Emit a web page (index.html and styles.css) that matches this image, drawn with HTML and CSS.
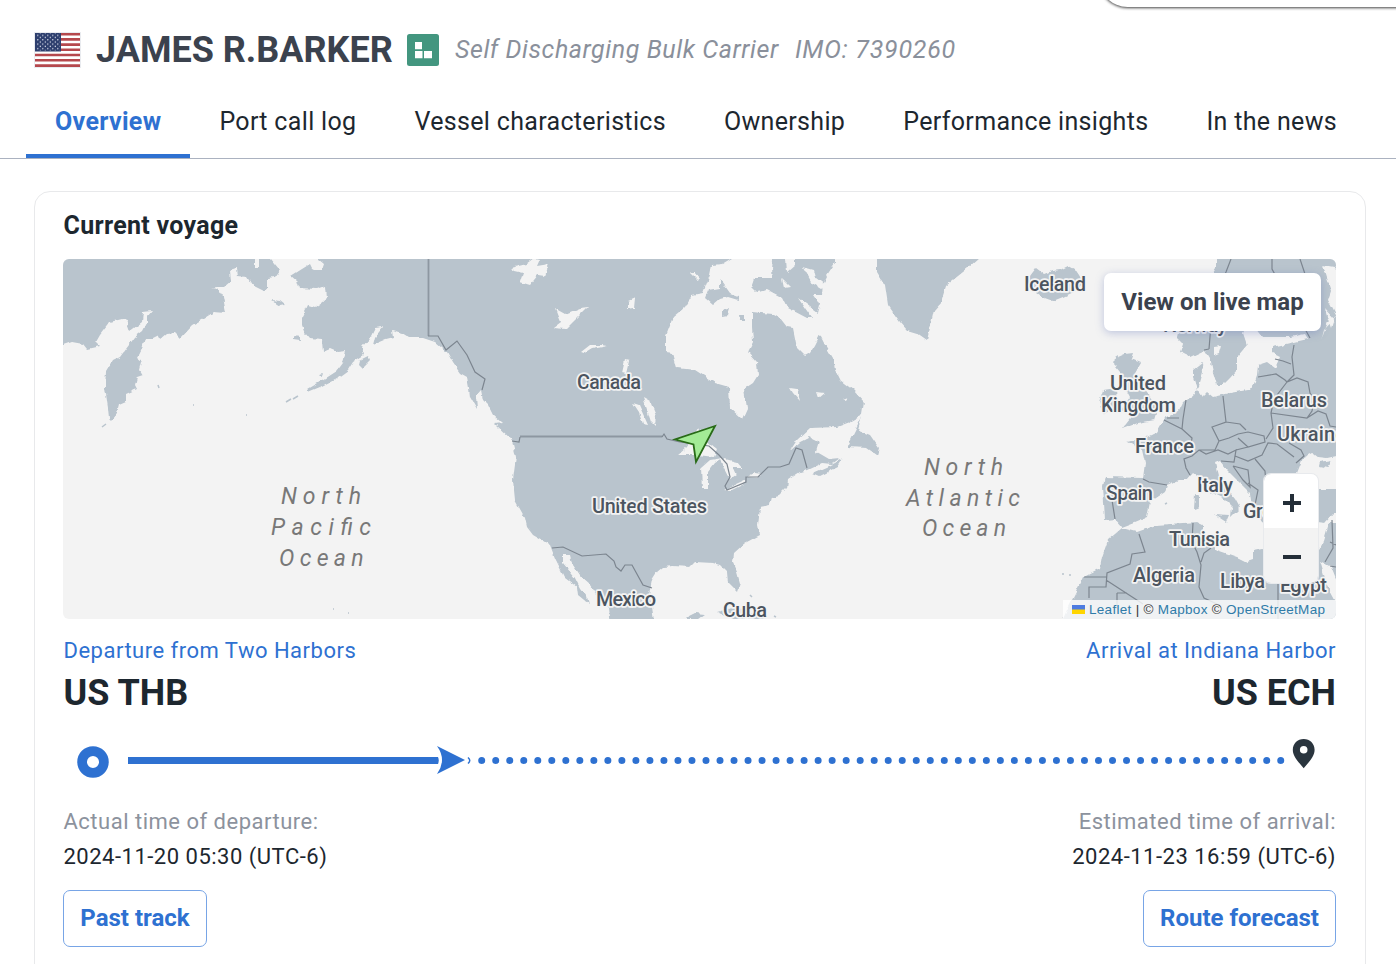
FILE: index.html
```html
<!DOCTYPE html>
<html lang="en">
<head>
<meta charset="utf-8">
<title>JAMES R.BARKER</title>
<link rel="stylesheet" href="styles.css">
</head>
<body>
<div class="search-pill"></div>
<header class="vessel">
  <svg class="flag" width="47" height="36" viewBox="0 0 47 36">
    <defs><pattern id="stars" width="5" height="4.4" patternUnits="userSpaceOnUse"><circle cx="1.3" cy="1.2" r=".7" fill="#dfe3ee"/><circle cx="3.8" cy="3.4" r=".7" fill="#dfe3ee"/></pattern></defs>
    <rect width="47" height="36" fill="#e9ebef"/><rect x="1" y="1" width="45" height="34" fill="#fff"/>
    <path d="M1 2.2h45M1 7.4h45M1 12.6h45M1 17.8h45M1 23h45M1 28.3h45M1 33.6h45" stroke="#b5484d" stroke-width="2.6"/>
    <rect x="1" y="1" width="26" height="18.5" fill="#2e3f6e"/><rect x="2" y="1.5" width="24" height="17" fill="url(#stars)"/>
  </svg>
  <h1 class="name">JAMES R.BARKER</h1>
  <svg class="badge" width="32" height="32" viewBox="0 0 32 32"><rect width="32" height="32" rx="2.5" fill="#43967f"/><path d="M8 8h7v7.300H8zM8 17h7.500v7.300H8zM17 17h8v7.300h-8z" fill="#fff"/></svg>
  <span class="kind">Self Discharging Bulk Carrier</span>
  <span class="imo">IMO: 7390260</span>
</header>
<nav class="tabs">
  <a class="tab active">Overview</a><a class="tab">Port call log</a><a class="tab">Vessel characteristics</a><a class="tab">Ownership</a><a class="tab">Performance insights</a><a class="tab">In the news</a>
</nav>
<main class="card">
  <h2 class="heading">Current voyage</h2>
  <div class="map">
    <svg class="world" width="1273" height="360" viewBox="63 259 1273 360">
      <defs><filter id="coast" x="0" y="0" width="100%" height="100%"><feTurbulence type="fractalNoise" baseFrequency=".14" numOctaves="2" seed="4"/><feDisplacementMap in="SourceGraphic" scale="4.500" xChannelSelector="R" yChannelSelector="G"/></filter></defs>
      <g filter="url(#coast)">
        <g class="land">
          <path d="M50 240V345H63L72 342 83 344 87 349 100 346 96 342 100 335 110 322 122 319 128 320 127 326 129 332 142 322 143 312 152 311 147 317 147 323 143 331 135 337 120 357 112 361 106 371 105 387 108 408 109 418 111 420 117 413 119 405 126 402 126 394 137 389 135 385 137 377 143 375 140 370 142 362 137 358 142 348 145 338 153 338 159 335 160 339 166 334 175 333 180 338 192 325 203 319 214 312 226 313 223 297 217 288 211 287 224 287 231 281 230 270 236 268 237 276 247 277 252 285 264 291 267 287 267 278 275 277 280 270 271 259V240H259V267H255V240Z"/>
          <path d="M318 240V259L324 264 322 270 313 270 310 264 302 269 291 276 297 281 299 288 317 289 326 286 327 298 322 302 315 307 308 305 302 317 302 325 305 333 310 339 322 340 323 352 330 349 337 352 346 351 343 363 337 371 323 380 308 389 308 392 320 387 337 378 348 370 353 362 364 355 362 347 370 338 375 328 383 327 375 337 373 345 385 340 393 338 392 330 402 333 410 338 423 338 435 342 447 352 453 363 460 373 467 377 469 388 470 397 477 409 476 396 481 390 483 400 488 405 493 415 502 423 495 424 512 440 516 457 513 480 515 500 525 518 527 527 533 535 550 545 555 558 560 568 565 578 577 587 578 595 589 604 587 597 580 588 575 578 563 563 563 555 570 555 572 563 582 578 590 585 598 597 609 608 612 635H656L652 607 649 595 652 580 657 572 663 567 673 566 690 567 695 562 713 563 720 565 727 572 728 583 737 592 740 583 737 572 733 563 734 553 745 543 760 535 758 525 760 507 770 505 772 497 780 495 787 488 788 480 800 472 807 470 822 463 832 464 840 458 829 459 817 452 820 442 810 437 800 442 790 451 797 440 810 428 837 427 850 422 862 415 864 402 853 390 840 380 835 370 833 358 825 345 820 335 815 345 810 353 805 356 797 348 793 328 787 327 780 318 773 314 752 312 752 328 753 342 748 352 757 362 758 375 753 383 744 389 747 408 742 419 730 408 729 387 715 383 695 370 677 368 673 353 666 352 666 335 673 317 685 307 692 295 703 293 710 275 712 265 722 264 732 258V240Z"/>
          <path d="M708 290 720 288 720 279 730 293 738 296 738 300 728 297 720 299 713 305 705 298ZM773 240V259L772 270 773 278 755 278 752 287 757 292 768 290 783 298 788 308 807 318 812 318 798 298 818 313 820 305 813 295 822 295 823 283 827 275 835 263 835 240ZM877 240V259L877 272 885 285 888 305 900 322 907 330 917 333 927 340 930 328 934 310 941 302 946 286 953 280 968 268 979 258V240Z"/>
          <path d="M862 417 858 430 870 435 879 448 877 455 867 448 847 447 853 435ZM813 473 827 467 843 459 838 467 820 476ZM722 311 730 308 728 315 722 316ZM740 315h4v6h-3ZM689 616 695 613 705 614 698 619H688ZM717 612 735 607 768 619H732Z"/>
          <path d="M1030 276 1036 268 1044 274 1052 271 1060 270 1068 266 1075 270 1079 276 1083 283 1076 291 1063 297 1053 301 1042 297 1036 293 1040 288 1030 284Z"/>
          <path d="M1118 357 1125 354 1133 353 1131 359 1141 363 1134 375 1143 388 1151 398 1159 407 1155 420 1137 423 1123 428 1133 415 1121 410 1130 397 1121 380 1120 372 1115 366ZM1103 390 1117 388 1118 405 1103 415 1099 402ZM1115 357l3-2-1 8-3 2Z"/>
          <path d="M1216 240V268L1206 285 1180 325 1177 337 1183 343 1180 352 1190 357 1205 350 1210 358 1213 372 1217 385 1223 385 1230 378 1237 370 1237 357 1247 345 1243 333 1250 320 1263 337 1290 337 1305 334 1308 339 1290 343 1272 347 1272 353 1280 357 1275 368 1267 362 1258 365 1257 375 1253 387 1247 390 1230 393 1213 397 1207 392 1202 397 1197 390 1193 378 1193 370 1202 363 1203 372 1199 386 1193 395 1183 402 1178 412 1165 418 1157 432 1147 437 1127 442 1142 450 1145 463 1143 478 1105 477 1103 485 1105 520 1115 519 1122 527 1135 522 1147 517 1150 502 1165 492 1167 485 1178 480 1187 480 1193 473 1203 480 1210 492 1223 498 1232 507 1231 517 1240 508 1235 499 1219 480 1215 463 1220 461 1227 470 1239 482 1250 493 1252 507 1262 522 1278 531 1282 517 1296 508 1299 520 1325 523 1334 513H1350V240Z"/>
          <path d="M1056 635 1067 610 1077 590 1083 577 1100 568 1102 557 1108 540 1122 528 1137 532 1157 525 1197 522 1203 525 1203 533 1217 550 1237 557 1247 562 1253 560 1253 550 1263 548 1285 555 1305 556 1318 551 1324 540 1329 523H1350V635ZM1195 494l4 2 0 11-5 2ZM1214 514l15 1-3 7ZM463 350l7 8-2 11-8-10ZM318 374l5-1-2 4ZM360 360l8-4 2 5-7 7-4-4ZM271 300l9 1 5 4-5 1ZM294 336l7 1v3l-7-1Z"/>
        </g>
        <g class="water">
          <path d="M510 268 527 264 535 258 540 259 537 266 549 264 545 276 538 275 530 285 520 282 523 273 514 271ZM556 309 565 314 580 308 588 307 573 322 566 329 553 328 561 322ZM581 352 590 345 608 345 592 348 584 353ZM628 301l7-3-1 10-6 1ZM625 360l4 1-3 13-4-1ZM633 403l6 2 9 20-5-1-4-12ZM643 397l7 4 6 15-1 10-4-4ZM678 455 687 447 698 428 704 439 717 450 714 457 698 455ZM701 468 710 460 723 458 715 463 708 472 708 489H702ZM721 458 737 462 742 468 733 468 736 475 730 479 724 468ZM723 490 735 485 746 480 746 483 730 491ZM746 477 755 472 762 473 757 478ZM690 272l8 8 2-1-6-7ZM803 267l11 3 2 8 9 7-3 4-10-6ZM786 259h9v6l-8 7ZM782 279l8 8-6 1ZM790 388l7 1 3 12-7-8ZM816 392l8 1-6 5ZM843 399l5-2-2 3ZM760 508l3 10-3-1ZM1214 347l7-1-2 7-5 2Z"/>
          <path d="M1297 473 1303 458 1313 453 1318 457 1327 458 1350 453V489H1320L1300 488ZM1334 267l6 9 7 28-9 15-10-19 3-9-8-26ZM1325 309l9 10-3 9-5-15ZM1322 338 1328 322 1337 316 1324 330ZM1320 561 1327 585 1341 611V592L1331 567Z"/>
        </g>
        <path class="land" d="M1320 462l12-2-4 8-9-2Z"/>
      </g>
      <g class="border">
        <path class="strong" d="M428.500 259V336M520 436.500H662"/>
        <path d="M428 336H438L446 350 457 341 467 355 475 372 485 379 482 390M512 441 519 442 520 437M662 437 664 434 667 439 680 442 709 446 719 455 727 464 730 477 725 486 727 490 746 482V477H758L768 467H780L789 464 796 448 802 450 807 468M552 548 563 547 582 556 606 554 614 561 616 567 621 571 625 565H632L643 585 652 588"/>
        <path d="M1231 259 1226 272 1213 300 1209 349M1272 259V269L1310 338M1300 259 1307 280M1209 349 1204 350M1294 345 1292 357 1294 375 1287 382M1258 377 1276 374 1285 380 1287 382 1297 378 1308 382 1310 393 1314 399 1312 411 1307 418 1271 413M1275 359 1283 361 1291 364M1287 382 1274 399 1271 413 1273 428 1266 439M1223 396 1226 422 1212 427 1219 441 1229 438 1238 434 1248 432 1264 436 1265 442 1248 447 1238 438M1226 422 1240 424 1246 430M1219 441 1215 450 1199 450 1192 456 1184 459 1186 468 1190 475M1186 400 1183 419 1182 429 1192 438 1190 450M1182 429 1164 420M1167 418 1179 418M1143 479 1149 482 1167 485M1115 485 1112 500 1115 519M1199 450 1206 454 1218 450 1228 454 1236 450 1234 462 1221 461M1236 450 1248 447M1235 456 1248 461 1262 455 1268 443 1277 444 1294 457M1233 466 1243 480 1250 487 1248 470 1233 466M1255 459 1265 471 1266 484 1274 488M1248 483 1258 490 1255 505M1289 443 1301 450 1304 456 1296 463M1307 418 1318 411 1326 414 1330 426 1336 427M1139 534 1145 552 1132 554 1130 564 1107 573 1106 587H1089V598M1084 577H1107M1106 580 1143 604M1117 593V609M1117 593H1127M1193 523 1192 542 1197 552 1201 565 1199 587 1204 598 1217 604M1201 562 1204 553 1211 548M1278 556V619M1332 520 1333 548 1325 562M1330 542 1336 545M1330 566 1336 567"/>
      </g>
      <g class="specks"><path d="M102 427l4-3M158 385l1 3M193 405h1M246 415h1M286 402l5-3M293 399l5-3M1062 574h2M1069 575h2M1165 504l2-1M750 595l2 2M774 616l2 1M333 609h1M348 613h1"/></g>
      <g class="place">
        <text x="577" y="388.500" textLength="64">Canada</text><text x="592" y="512.500" textLength="115">United States</text>
        <text x="596" y="606" textLength="60">Mexico</text><text x="723" y="617" textLength="44">Cuba</text>
        <text x="1024" y="290.500" textLength="62">Iceland</text><text x="1163" y="332" textLength="64">Norway</text>
        <text x="1110" y="389.500" textLength="56">United</text><text x="1101" y="411.500" textLength="75">Kingdom</text>
        <text x="1261" y="406.500" textLength="66">Belarus</text><text x="1277" y="441" textLength="69">Ukraine</text>
        <text x="1135" y="453" textLength="59">France</text><text x="1106" y="499.500" textLength="47">Spain</text><text x="1197" y="491.500" textLength="36">Italy</text>
        <text x="1243" y="518" textLength="60">Greece</text><text x="1169" y="546" textLength="61">Tunisia</text>
        <text x="1133" y="582" textLength="62">Algeria</text><text x="1220" y="588" textLength="45">Libya</text><text x="1280" y="592" textLength="47">Egypt</text>
      </g>
      <g class="ocean">
        <text x="281" y="503.500" textLength="80">North</text><text x="271" y="534.500" textLength="100">Pacific</text><text x="279" y="566" textLength="84.500">Ocean</text>
        <text x="924" y="474.500" textLength="79">North</text><text x="906" y="505.500" textLength="114">Atlantic</text><text x="922" y="536" textLength="84">Ocean</text>
      </g>
      <path d="M715 426 675 439.500 693.500 444.500 696 462Z" fill="#a3eb96" stroke="#296b18" stroke-width="1.800"/>
    </svg>
    <a class="live">View on live map</a>
    <div class="zoom"><span class="zoom-in"><svg width="18" height="18"><path d="M0 9h18M9 0v18" stroke="#242e38" stroke-width="4"/></svg></span><span class="zoom-out"><svg width="18" height="18"><path d="M0 9h18" stroke="#242e38" stroke-width="4"/></svg></span></div>
    <div class="credit"><svg width="13" height="9"><path fill="#4c7be1" d="M0 0h13v5H0z"/><path fill="#ffd500" d="M0 4.500h13V9H0z"/></svg><span><a>Leaflet</a> | © <a>Mapbox</a> © <a>OpenStreetMap</a></span></div>
  </div>
  <div class="row ports"><span>Departure from Two Harbors</span><span>Arrival at Indiana Harbor</span></div>
  <div class="row codes"><span>US THB</span><span>US ECH</span></div>
  <svg class="track" width="1273" height="60" viewBox="63 730 1273 60">
    <circle cx="93" cy="762" r="10.900" fill="none" stroke="#2e71d1" stroke-width="9.700"/>
    <path d="M128 757H438q1.500 3.500 0 7H128Z" fill="#2e71d1"/>
    <path d="M437 746 465 760 437 774Q447 760 437 746Z" fill="#2e71d1"/>
    <path d="M468 757.500q3.500 3 0 6" fill="none" stroke="#2e71d1" stroke-width="1.500"/>
    <path d="M481.700 760.500H1282" stroke="#2e71d1" stroke-width="7" stroke-linecap="round" stroke-dasharray="0 14.018"/>
    <path fill-rule="evenodd" d="M1303.700 739c-6.200 0-10.900 4.700-10.900 10.700 0 6.800 5.400 12 10.900 18.500 5.500-6.500 10.900-11.700 10.900-18.500 0-6-4.700-10.700-10.900-10.700Zm0 7a3.800 3.800 0 1 1 0 7.600 3.800 3.800 0 0 1 0-7.600Z" fill="#2a353e"/>
  </svg>
  <div class="row labels"><span>Actual time of departure:</span><span>Estimated time of arrival:</span></div>
  <div class="row times"><span>2024-11-20 05:30 (UTC-6)</span><span>2024-11-23 16:59 (UTC-6)</span></div>
  <div class="row actions"><a class="btn past">Past track</a><a class="btn route">Route forecast</a></div>
</main>
</body>
</html>
```
FILE: styles.css
```css
* { box-sizing: border-box; }
body { margin: 0; height: 964px; overflow: hidden; position: relative; background: #fff; color: #1d272f; font-family: Roboto, sans-serif; }
.search-pill { position: absolute; left: 1099px; top: -50px; width: 340px; height: 57px; border-radius: 29px; background: #fff; box-shadow: 0 1px 3px rgba(0,0,0,.75); }
.vessel { height: 100px; padding-left: 34px; display: flex; align-items: center; white-space: nowrap; }
.flag { flex: none; }
.name { width: 296px; margin: 0 0 0 15px; font-size: 36px; line-height: 44px; font-weight: 700; color: #3b424e; }
.badge { flex: none; margin-left: 15px; }
.kind, .imo { font-size: 25px; font-style: italic; line-height: 30px; color: #8a909b; }
.kind { width: 324px; margin-left: 16px; letter-spacing: .57px; }
.imo { margin-left: 16px; letter-spacing: .75px; }
.tabs { height: 59px; padding-left: 26px; display: flex; border-bottom: 1px solid #abb2c0; }
.tab { height: 58px; padding: 7px 29px 0; font-size: 25px; line-height: 30px; letter-spacing: .33px; white-space: nowrap; }
.tab.active { color: #2e71d1; font-weight: 700; border-bottom: 4px solid #2e71d1; }
.card { width: 1332px; height: 800px; margin: 32px 0 0 34px; padding: 18px 29px 0 28px; border: 1px solid #e8e9eb; border-radius: 16px; }
.heading { margin: 0; height: 49px; padding-left: .5px; font-size: 25px; line-height: 32px; font-weight: 700; letter-spacing: .3px; }
.map { position: relative; height: 360px; border-radius: 6px; overflow: hidden; background: #f3f3f3; }
.world { display: block; }
.land { fill: #b9c4cd; }
.water { fill: #f3f3f3; }
.border { fill: none; stroke: #7c858f; stroke-width: 1.2; }
.strong { stroke-width: 1.8; stroke: #8d97a1; }
.specks { fill: none; stroke: #b9c4cd; stroke-width: 1.5; }
.place { font-size: 20px; font-weight: 500; fill: #4c5560; stroke: #f3f3f3; stroke-width: 3.5px; paint-order: stroke; stroke-linejoin: round; }
.ocean { font-size: 23px; font-style: italic; fill: #787878; }
.live { position: absolute; left: 1041px; top: 14px; width: 217px; height: 58px; border-radius: 7px; background: #fff; color: #3b424e; box-shadow: 0 2px 8px rgba(90,110,180,.35); font-size: 24px; font-weight: 700; line-height: 58px; text-align: center; letter-spacing: 0; }
.zoom { position: absolute; left: 1201px; top: 215px; width: 54px; height: 109px; border-radius: 7px; overflow: hidden; box-shadow: 0 0 0 1px #e8eaed; display: flex; flex-direction: column; }
.zoom span { height: 54px; display: flex; align-items: center; justify-content: center; padding-top: 4px; padding-left: 1px; background: #fff; }
.zoom .zoom-out { height: 55px; background: #f3f3f3; padding-top: 3px; }
.credit { position: absolute; right: 0; bottom: 0; width: 273px; height: 19px; padding-left: 9px; display: flex; align-items: center; gap: 4px; background: rgba(255,255,255,.78); font: 13.5px/19px "Liberation Sans", sans-serif; color: #333; white-space: nowrap; letter-spacing: .3px; }
.credit a { color: #2f7ba8; }
.row { display: flex; justify-content: space-between; align-items: center; white-space: nowrap; }
.ports { margin-top: 16px; height: 30px; padding-left: .5px; color: #2e71d1; font-size: 22px; letter-spacing: .5px; }
.codes { height: 54px; margin-top: 1px; padding-left: .5px; font-size: 36px; font-weight: 700; }
.track { display: block; margin-top: 10px; }
.labels { height: 36px; margin-top: 13px; padding-left: .5px; color: #8c929d; font-size: 22px; letter-spacing: .5px; }
.times { height: 34px; padding-left: .5px; font-size: 22px; letter-spacing: .5px; }
.actions { margin-top: 17px; }
.btn { height: 57px; border: 1px solid #78a5e6; border-radius: 7px; color: #2e71d1; font-size: 24px; line-height: 54px; font-weight: 700; text-align: center; letter-spacing: 0; }
.past { width: 144px; }
.route { width: 193px; }
```
